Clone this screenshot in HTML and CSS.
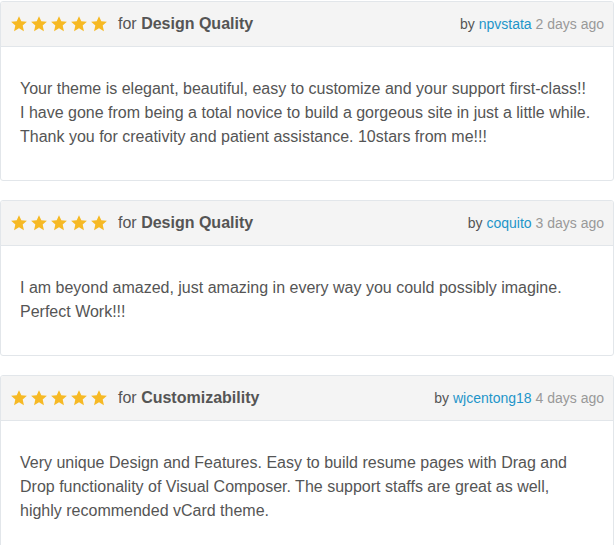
FILE: index.html
```html
<!DOCTYPE html>
<html>
<head>
<meta charset="utf-8">
<link rel="stylesheet" href="styles.css">
</head>
<body>
<div class="reviews">
  <div class="card">
    <div class="head">
      <div class="rating">
        <span class="stars">
          <svg viewBox="0 0 24 24"><path d="M12 1.5l3.1 6.9 7.4.7-5.6 5 1.7 7.4L12 17.6l-6.6 3.9 1.7-7.4-5.6-5 7.4-.7z"/></svg>
          <svg viewBox="0 0 24 24"><path d="M12 1.5l3.1 6.9 7.4.7-5.6 5 1.7 7.4L12 17.6l-6.6 3.9 1.7-7.4-5.6-5 7.4-.7z"/></svg>
          <svg viewBox="0 0 24 24"><path d="M12 1.5l3.1 6.9 7.4.7-5.6 5 1.7 7.4L12 17.6l-6.6 3.9 1.7-7.4-5.6-5 7.4-.7z"/></svg>
          <svg viewBox="0 0 24 24"><path d="M12 1.5l3.1 6.9 7.4.7-5.6 5 1.7 7.4L12 17.6l-6.6 3.9 1.7-7.4-5.6-5 7.4-.7z"/></svg>
          <svg viewBox="0 0 24 24"><path d="M12 1.5l3.1 6.9 7.4.7-5.6 5 1.7 7.4L12 17.6l-6.6 3.9 1.7-7.4-5.6-5 7.4-.7z"/></svg>
        </span>
        <span class="for">for <b>Design Quality</b></span>
      </div>
      <div class="meta">by <a class="user">npvstata</a> <span class="date">2 days ago</span></div>
    </div>
    <div class="body">
      <p>Your theme is elegant, beautiful, easy to customize and your support first-class!!<br>I have gone from being a total novice to build a gorgeous site in just a little while.<br>Thank you for creativity and patient assistance. 10stars from me!!!</p>
    </div>
  </div>
  <div class="card">
    <div class="head">
      <div class="rating">
        <span class="stars">
          <svg viewBox="0 0 24 24"><path d="M12 1.5l3.1 6.9 7.4.7-5.6 5 1.7 7.4L12 17.6l-6.6 3.9 1.7-7.4-5.6-5 7.4-.7z"/></svg>
          <svg viewBox="0 0 24 24"><path d="M12 1.5l3.1 6.9 7.4.7-5.6 5 1.7 7.4L12 17.6l-6.6 3.9 1.7-7.4-5.6-5 7.4-.7z"/></svg>
          <svg viewBox="0 0 24 24"><path d="M12 1.5l3.1 6.9 7.4.7-5.6 5 1.7 7.4L12 17.6l-6.6 3.9 1.7-7.4-5.6-5 7.4-.7z"/></svg>
          <svg viewBox="0 0 24 24"><path d="M12 1.5l3.1 6.9 7.4.7-5.6 5 1.7 7.4L12 17.6l-6.6 3.9 1.7-7.4-5.6-5 7.4-.7z"/></svg>
          <svg viewBox="0 0 24 24"><path d="M12 1.5l3.1 6.9 7.4.7-5.6 5 1.7 7.4L12 17.6l-6.6 3.9 1.7-7.4-5.6-5 7.4-.7z"/></svg>
        </span>
        <span class="for">for <b>Design Quality</b></span>
      </div>
      <div class="meta">by <a class="user">coquito</a> <span class="date">3 days ago</span></div>
    </div>
    <div class="body">
      <p>I am beyond amazed, just amazing in every way you could possibly imagine.<br>Perfect Work!!!</p>
    </div>
  </div>
  <div class="card">
    <div class="head">
      <div class="rating">
        <span class="stars">
          <svg viewBox="0 0 24 24"><path d="M12 1.5l3.1 6.9 7.4.7-5.6 5 1.7 7.4L12 17.6l-6.6 3.9 1.7-7.4-5.6-5 7.4-.7z"/></svg>
          <svg viewBox="0 0 24 24"><path d="M12 1.5l3.1 6.9 7.4.7-5.6 5 1.7 7.4L12 17.6l-6.6 3.9 1.7-7.4-5.6-5 7.4-.7z"/></svg>
          <svg viewBox="0 0 24 24"><path d="M12 1.5l3.1 6.9 7.4.7-5.6 5 1.7 7.4L12 17.6l-6.6 3.9 1.7-7.4-5.6-5 7.4-.7z"/></svg>
          <svg viewBox="0 0 24 24"><path d="M12 1.5l3.1 6.9 7.4.7-5.6 5 1.7 7.4L12 17.6l-6.6 3.9 1.7-7.4-5.6-5 7.4-.7z"/></svg>
          <svg viewBox="0 0 24 24"><path d="M12 1.5l3.1 6.9 7.4.7-5.6 5 1.7 7.4L12 17.6l-6.6 3.9 1.7-7.4-5.6-5 7.4-.7z"/></svg>
        </span>
        <span class="for">for <b>Customizability</b></span>
      </div>
      <div class="meta">by <a class="user">wjcentong18</a> <span class="date">4 days ago</span></div>
    </div>
    <div class="body">
      <p>Very unique Design and Features. Easy to build resume pages with Drag and<br>Drop functionality of Visual Composer. The support staffs are great as well,<br>highly recommended vCard theme.</p>
    </div>
  </div>
</div>
</body>
</html>
```

FILE: styles.css
```css
html, body {
  margin: 0;
  padding: 0;
  background: #fff;
}
body {
  font-family: "Liberation Sans", Arial, sans-serif;
  color: #555;
  font-size: 16px;
}
.reviews {
  width: 614px;
  padding-top: 1px;
  display: flex;
  flex-direction: column;
  gap: 19px;
}
.card {
  border: 1px solid #e2e6ea;
  border-radius: 3px;
  overflow: hidden;
}
.head {
  background: #f4f4f4;
  border-bottom: 1px solid #e2e6ea;
  height: 44px;
  display: flex;
  align-items: center;
  justify-content: space-between;
  padding: 0 9px 0 9px;
}
.rating {
  display: flex;
  align-items: center;
}
.stars {
  display: flex;
  gap: 2px;
  margin-right: 10px;
}
.stars svg {
  width: 18px;
  height: 18px;
  fill: #f6b924;
  display: block;
}
.for b {
  font-weight: bold;
}
.meta {
  font-size: 14px;
  color: #555;
}
.user {
  color: #1e95c9;
  text-decoration: none;
}
.date {
  color: #999;
}
.body {
  padding: 30px 19px 31px;
}
.body p {
  margin: 0;
  line-height: 24px;
}
```
